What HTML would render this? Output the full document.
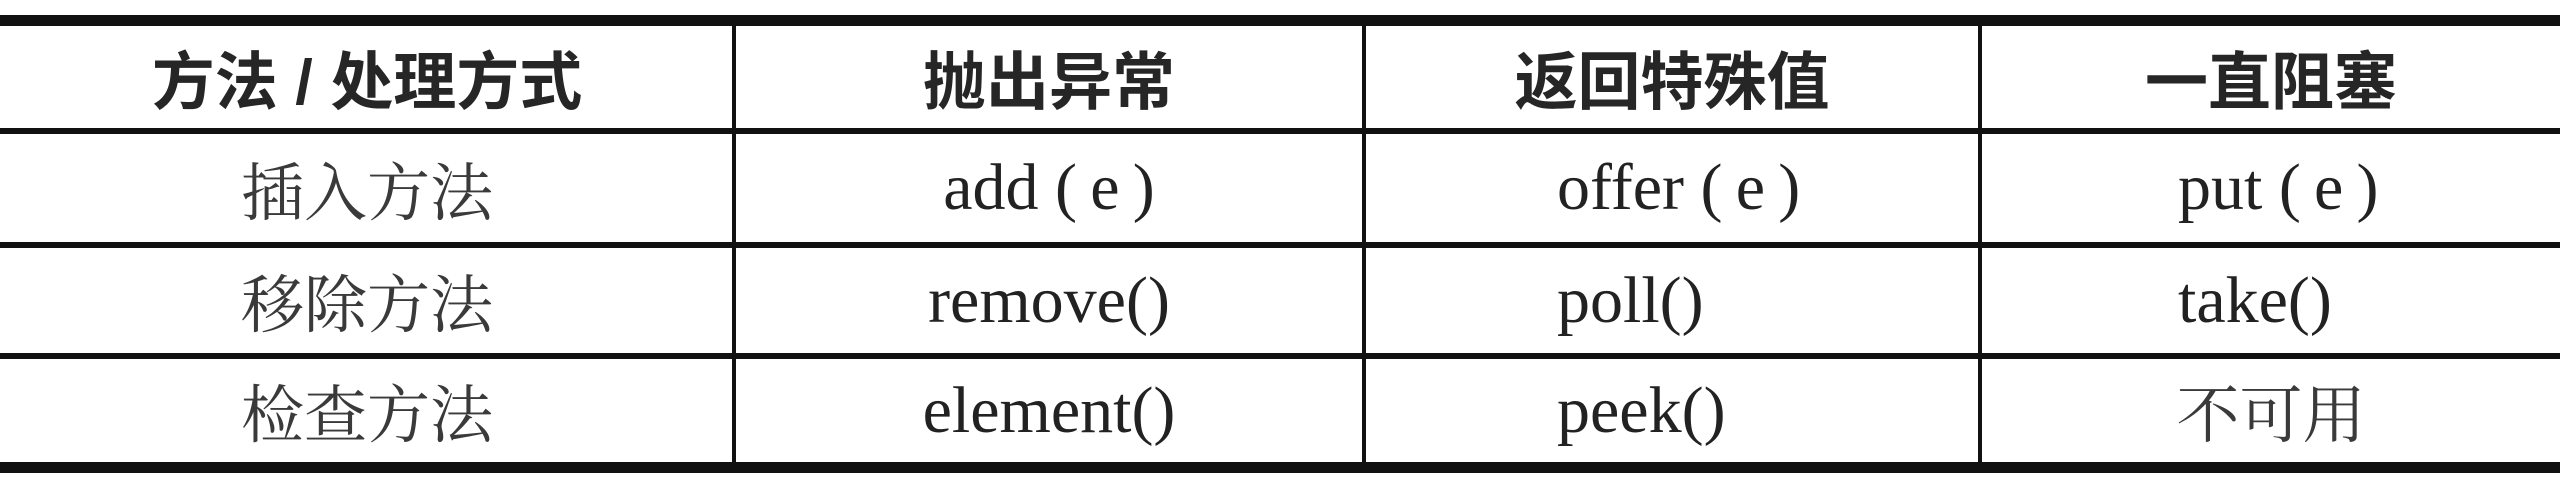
<!DOCTYPE html>
<html><head><meta charset="utf-8"><style>
body{margin:0;width:2560px;height:486px;background:#fff;position:relative;overflow:hidden}
.h{position:absolute;left:0;width:2560px;background:#111}
.v{position:absolute;width:4px;background:#111;top:20px;height:448px}
.c{position:absolute;display:flex;align-items:center;justify-content:center;white-space:nowrap}
.hd{font-family:"Liberation Sans","Noto Sans CJK SC",sans-serif;font-weight:bold;font-size:63px;color:#262626}
.zh{font-family:"Liberation Serif","Noto Serif CJK SC",serif;font-size:63px;color:#3a3a3a}
.en{font-family:"Liberation Serif","Noto Serif CJK SC",serif;font-size:66px;color:#222}
</style></head><body>
<div class="h" style="top:15px;height:11px"></div>
<div class="h" style="top:128px;height:6px"></div>
<div class="h" style="top:242px;height:6px"></div>
<div class="h" style="top:353px;height:6px"></div>
<div class="h" style="top:462px;height:11px"></div>
<div class="v" style="left:732px"></div>
<div class="v" style="left:1362px"></div>
<div class="v" style="left:1978px"></div>

<div class="c hd" style="left:0;width:734px;top:26px;height:102px">方法 / 处理方式</div>
<div class="c hd" style="left:736px;width:626px;top:26px;height:102px">抛出异常</div>
<div class="c hd" style="left:1366px;width:612px;top:26px;height:102px">返回特殊值</div>
<div class="c hd" style="left:1982px;width:578px;top:26px;height:102px">一直阻塞</div>

<div class="c zh" style="left:0;width:734px;top:134px;height:108px">插入方法</div>
<div class="c en" style="left:736px;width:626px;top:134px;height:108px">add (&thinsp;e&thinsp;)</div>
<div class="c en" style="left:1366px;width:612px;top:134px;height:108px;justify-content:flex-start"><span style="margin-left:191px">offer (&thinsp;e&thinsp;)</span></div>
<div class="c en" style="left:1982px;width:578px;top:134px;height:108px;justify-content:flex-start"><span style="margin-left:196px">put (&thinsp;e&thinsp;)</span></div>

<div class="c zh" style="left:0;width:734px;top:248px;height:105px">移除方法</div>
<div class="c en" style="left:736px;width:626px;top:248px;height:105px">remove()</div>
<div class="c en" style="left:1366px;width:612px;top:248px;height:105px;justify-content:flex-start"><span style="margin-left:191px">poll()</span></div>
<div class="c en" style="left:1982px;width:578px;top:248px;height:105px;justify-content:flex-start"><span style="margin-left:196px">take()</span></div>

<div class="c zh" style="left:0;width:734px;top:359px;height:103px">检查方法</div>
<div class="c en" style="left:736px;width:626px;top:359px;height:103px">element()</div>
<div class="c en" style="left:1366px;width:612px;top:359px;height:103px;justify-content:flex-start"><span style="margin-left:191px">peek()</span></div>
<div class="c zh" style="left:1982px;width:578px;top:359px;height:103px">不可用</div>
</body></html>
